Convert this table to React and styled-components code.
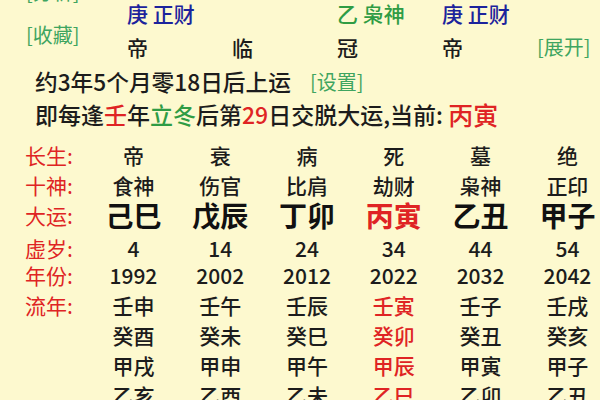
import React from "react";
import styled, { createGlobalStyle } from "styled-components";

const GlobalStyle = createGlobalStyle`
  html, body {
    margin: 0;
    padding: 0;
    background: #fdf9cf;
    overflow: hidden;
  }
  body {
    font-family: "Noto Sans CJK SC", "Noto Sans", sans-serif;
    font-weight: 500;
    color: #1c1c1c;
  }
`;

const RED = "#df2424";
const GREEN = "#2f9c44";
const LINK = "#3fa560";
const BLUE = "#1c239c";

const Page = styled.div`
  width: 600px;
  height: 400px;
  overflow: hidden;
  background: #fdf9cf;
`;

const Top = styled.div`
  display: flex;
  height: 62px;
`;

const LinkColumn = styled.div`
  width: 101px;
  padding-left: 26px;
  margin-top: -23px;
  display: flex;
  flex-direction: column;
  gap: 13px;
`;

const LinkText = styled.span`
  color: ${LINK};
  font-size: 20px;
  font-weight: 400;
  line-height: 30px;
  white-space: nowrap;
  margin-left: ${(p) => p.$shift || 0}px;
`;

const PillarGrid = styled.div`
  display: grid;
  grid-template-columns: repeat(4, 105px) 1fr;
  grid-template-rows: 30px 30px;
  row-gap: 4px;
  margin-top: -2px;
  align-items: center;
`;

const PillarCell = styled.span`
  font-size: 21px;
  line-height: 30px;
  white-space: nowrap;
  color: ${(p) => p.$color || "#1c1c1c"};
`;

const InfoLine = styled.div`
  padding-left: 35px;
  font-size: ${(p) => p.$size}px;
  line-height: ${(p) => p.$h}px;
  margin-top: ${(p) => p.$mt}px;
  white-space: nowrap;
  display: flex;
  align-items: center;
`;

const Hl = styled.span`
  color: ${(p) => p.$color};
  font-size: ${(p) => p.$size || "inherit"};
`;

const SetLink = styled.span`
  color: ${LINK};
  font-size: 20px;
  font-weight: 400;
  margin-left: 19px;
`;

const Table = styled.div`
  margin-top: 9px;
  padding-left: 25px;
  display: grid;
  grid-template-columns: 65px repeat(6, 86.8px);
  grid-auto-rows: 30px;
  align-items: center;
`;

const Row = styled.div`
  display: contents;
`;

const Label = styled.div`
  color: ${RED};
  font-size: 21px;
  font-weight: 400;
  line-height: ${(p) => p.$h || 30}px;
  height: ${(p) => p.$h || 30}px;
  margin-top: ${(p) => p.$mt || 0}px;
  white-space: nowrap;
`;

const Cell = styled.div`
  text-align: center;
  font-size: ${(p) => (p.$big ? 28 : 21)}px;
  font-weight: ${(p) => (p.$big ? 700 : 500)};
  line-height: ${(p) => p.$h || 30}px;
  height: ${(p) => p.$h || 30}px;
  margin-top: ${(p) => p.$mt || 0}px;
  color: ${(p) => (p.$red ? RED : p.$big ? "#111" : "#1c1c1c")};
  white-space: nowrap;
`;

const rows = [
  { label: "长生:", cells: ["帝", "衰", "病", "死", "墓", "绝"] },
  { label: "十神:", cells: ["食神", "伤官", "比肩", "劫财", "枭神", "正印"], h: 29 },
  { label: "大运:", cells: ["己巳", "戊辰", "丁卯", "丙寅", "乙丑", "甲子"], big: true, h: 34, redCol: 3 },
  { label: "虚岁:", cells: ["4", "14", "24", "34", "44", "54"], mt: 5 },
  { label: "年份:", cells: ["1992", "2002", "2012", "2022", "2032", "2042"] },
  { label: "流年:", cells: ["壬申", "壬午", "壬辰", "壬寅", "壬子", "壬戌"], redCol: 3 },
  { label: "", cells: ["癸酉", "癸未", "癸巳", "癸卯", "癸丑", "癸亥"], redCol: 3 },
  { label: "", cells: ["甲戌", "甲申", "甲午", "甲辰", "甲寅", "甲子"], redCol: 3 },
  { label: "", cells: ["乙亥", "乙酉", "乙未", "乙巳", "乙卯", "乙丑"], redCol: 3 },
];

export default function App() {
  return (
    <Page>
      <GlobalStyle />
      <Top>
        <LinkColumn>
          <LinkText>[分析]</LinkText>
          <LinkText>[收藏]</LinkText>
        </LinkColumn>
        <PillarGrid>
          <PillarCell $color={BLUE}>庚 正财</PillarCell>
          <PillarCell />
          <PillarCell $color={GREEN}>乙 枭神</PillarCell>
          <PillarCell $color={BLUE}>庚 正财</PillarCell>
          <PillarCell />
          <PillarCell>帝</PillarCell>
          <PillarCell>临</PillarCell>
          <PillarCell>冠</PillarCell>
          <PillarCell>帝</PillarCell>
          <LinkText $shift={-10}>[展开]</LinkText>
        </PillarGrid>
      </Top>
      <InfoLine $size={22.7} $h={30} $mt={5}>
        约3年5个月零18日后上运<SetLink>[设置]</SetLink>
      </InfoLine>
      <InfoLine $size={23} $h={34} $mt={0}>
        即每逢<Hl $color={RED}>壬</Hl>年<Hl $color={GREEN}>立冬</Hl>后第
        <Hl $color={RED}>29</Hl>日交脱大运,当前:&nbsp;
        <Hl $color={RED} $size="25px">丙寅</Hl>
      </InfoLine>
      <Table>
        {rows.map((r, i) => (
          <Row key={i}>
            <Label $h={r.h} $mt={r.mt}>{r.label}</Label>
            {r.cells.map((c, j) => (
              <Cell key={j} $big={r.big} $h={r.h} $mt={r.mt} $red={r.redCol === j}>
                {c}
              </Cell>
            ))}
          </Row>
        ))}
      </Table>
    </Page>
  );
}
